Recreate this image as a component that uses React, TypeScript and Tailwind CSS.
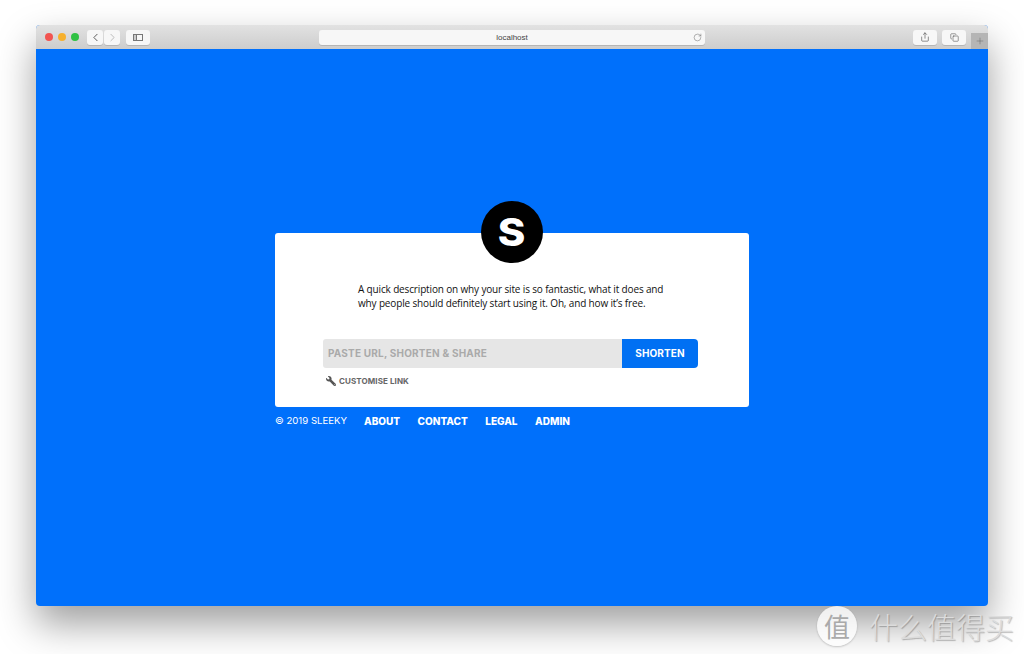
import { ChevronLeft, ChevronRight, RotateCw, Share, Copy, Plus } from "lucide-react";
import { FaWrench } from "react-icons/fa";

const FOOTER_LINKS = ["ABOUT", "CONTACT", "LEGAL", "ADMIN"];

function ToolbarButton({ className, children }: { className: string; children: React.ReactNode }) {
  return (
    <div className={`flex h-[15px] items-center justify-center rounded-[3px] bg-[#f7f7f7] shadow-[0_1px_0_rgba(0,0,0,0.12)] ${className}`}>
      {children}
    </div>
  );
}

function Toolbar() {
  return (
    <div className="relative flex h-6 items-center rounded-t-[4px] bg-gradient-to-b from-[#e2e2e2] to-[#cdcdcd] pl-2 pr-[22px]">
      {/* Traffic lights */}
      <div className="flex w-[43px] gap-[5px] pl-[0.5px]">
        <span className="h-2 w-2 rounded-full bg-[#f25450]" />
        <span className="h-2 w-2 rounded-full bg-[#f6b02d]" />
        <span className="h-2 w-2 rounded-full bg-[#2fc143]" />
      </div>
      <div className="flex gap-px">
        <ToolbarButton className="w-4">
          <ChevronLeft size={13} strokeWidth={1.6} className="text-[#444]" />
        </ToolbarButton>
        <ToolbarButton className="w-4">
          <ChevronRight size={13} strokeWidth={1.4} className="text-[#aaa]" />
        </ToolbarButton>
      </div>
      <ToolbarButton className="ml-1.5 w-6">
        <span className="flex h-[7px] w-[10px] border border-[#777]">
          <span className="w-[3px] border-r border-[#777] bg-[#ccc]" />
        </span>
      </ToolbarButton>
      {/* Address bar */}
      <ToolbarButton className="relative ml-[169px] w-[386px]">
        <span className="pt-px font-['Liberation_Sans',sans-serif] text-[8px] text-[#444]">localhost</span>
        <RotateCw size={9} strokeWidth={1.3} className="absolute right-[3px] text-[#666]" />
      </ToolbarButton>
      <ToolbarButton className="ml-[208px] w-6">
        <Share size={10} strokeWidth={1.4} className="text-[#444]" />
      </ToolbarButton>
      <ToolbarButton className="ml-[5px] w-6">
        <Copy size={9} strokeWidth={1.4} className="text-[#444]" />
      </ToolbarButton>
      <div className="absolute bottom-0 right-0 flex h-4 w-[17px] items-center justify-center bg-[#b5b5b5]">
        <Plus size={10} strokeWidth={1} className="text-[#555]" />
      </div>
    </div>
  );
}

export default function App() {
  return (
    <div className="relative h-[654px] w-[1024px] overflow-hidden bg-white pl-9 pt-[25px]">
      <div className="h-[581px] w-[952px] rounded-[4px] bg-[#0070fb] shadow-[0_18px_38px_rgba(0,0,0,0.38)]">
        <Toolbar />

        <div className="flex flex-col items-center pt-[152px]">
          <div className="z-10 -mb-[30px] flex h-[62px] w-[62px] items-center justify-center rounded-full bg-black">
            <span className="scale-x-110 font-['Inter',sans-serif] text-[38px] font-extrabold leading-none text-white">S</span>
          </div>

          {/* Card */}
          <div className="h-[174px] w-[474px] rounded-[3px] bg-white pl-12 pt-[49px]">
            <p className="w-[350px] pl-[35px] font-['Open_Sans',sans-serif] text-[10px] leading-[14px] tracking-[-0.15px] text-[#111]">
              A quick description on why your site is so fantastic, what it does and why people should definitely start using it. Oh, and how it’s free.
            </p>
            <div className="mt-[29px] flex h-[29px] w-[375px]">
              <div className="flex flex-1 items-center rounded-l-[3px] bg-[#e6e6e6] pl-[5px] font-['Inter',sans-serif] text-[10px] font-bold tracking-[0.2px] text-[#aaaaaa]">
                PASTE URL, SHORTEN &amp; SHARE
              </div>
              <div className="flex w-[76px] items-center justify-center rounded-r-[4px] bg-[#0070f3] font-['Inter',sans-serif] text-[10px] font-bold tracking-[0.1px] text-white">
                SHORTEN
              </div>
            </div>
            <div className="mt-[7px] flex items-center gap-[3px] pl-[3px]">
              <FaWrench size={10} className="-scale-x-100 text-[#555]" />
              <span className="font-['Inter',sans-serif] text-[8px] font-bold tracking-[0.1px] text-[#666]">CUSTOMISE LINK</span>
            </div>
          </div>

          {/* Footer */}
          <div className="mt-[7px] flex w-[474px] items-center font-['Inter',sans-serif] text-white">
            <span className="mr-[17px] text-[9.6px] font-normal">© 2019 SLEEKY</span>
            <div className="flex gap-[17.5px] text-[10px] font-extrabold">
              {FOOTER_LINKS.map((link) => (
                <span key={link}>{link}</span>
              ))}
            </div>
          </div>
        </div>
      </div>

      {/* Watermark */}
      <div className="absolute bottom-[8px] left-[817px] flex items-center gap-[12px]">
        <span className="flex h-10 w-10 items-center justify-center rounded-full bg-white/80 font-['Noto_Sans_CJK_SC',sans-serif] text-[26px] leading-none text-[#aaa] shadow-[0_1px_2px_rgba(0,0,0,0.2)]">值</span>
        <span className="font-['Noto_Sans_CJK_SC',sans-serif] text-[29px] font-light leading-none text-[#dcdcdc] [text-shadow:1px_1px_1px_rgba(0,0,0,0.25)]">什么值得买</span>
      </div>
    </div>
  );
}
